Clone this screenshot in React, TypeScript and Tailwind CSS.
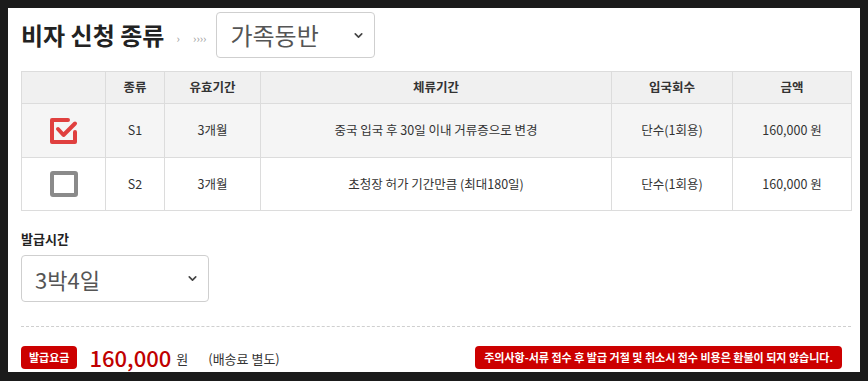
import { ChevronDown } from 'lucide-react';

interface VisaRow {
  code: string;
  valid: string;
  stay: string;
  entry: string;
  price: string;
  checked: boolean;
}

const rows: VisaRow[] = [
  {
    code: 'S1',
    valid: '3개월',
    stay: '중국 입국 후 30일 이내 거류증으로 변경',
    entry: '단수(1회용)',
    price: '160,000 원',
    checked: true,
  },
  {
    code: 'S2',
    valid: '3개월',
    stay: '초청장 허가 기간만큼 (최대180일)',
    entry: '단수(1회용)',
    price: '160,000 원',
    checked: false,
  },
];

const CheckIcon = ({ checked }: { checked: boolean }) =>
  checked ? (
    <svg width="30" height="28" viewBox="0 0 30 28" fill="none">
      <path
        d="M19 3H3V25H26V15"
        stroke="#e0403f"
        strokeWidth="4"
        strokeLinejoin="round"
        strokeLinecap="round"
      />
      <path
        d="M9 12L14.5 18L26 6.5"
        stroke="#e0403f"
        strokeWidth="4"
        strokeLinejoin="round"
        strokeLinecap="round"
      />
    </svg>
  ) : (
    <svg width="30" height="28" viewBox="0 0 30 28" fill="none">
      <rect x="3" y="3" width="24" height="22" stroke="#8a8a8a" strokeWidth="4" rx="1" />
    </svg>
  );

const SelectBox = ({
  value,
  className,
  textSize,
}: {
  value: string;
  className: string;
  textSize: string;
}) => (
  <div
    className={`flex items-center justify-between rounded border border-[#cfcfcf] bg-white pl-[13px] pr-[9px] ${className}`}
  >
    <span className={`${textSize} leading-none text-[#555]`}>{value}</span>
    <ChevronDown size={13} strokeWidth={3} className="text-[#444]" />
  </div>
);

export default function App() {
  return (
    <div
      className="h-[381px] w-[868px] overflow-hidden bg-[#1b1b1b] pl-2 pt-2"
      style={{ fontFamily: '"Noto Sans CJK KR", "Noto Sans", sans-serif' }}
    >
      <div className="h-[364px] w-[852px] overflow-hidden bg-white pl-[13px] pr-[9px] pt-[4px]">
        {/* title */}
        <div className="flex items-center">
          <h2 className="text-[24px] font-bold leading-none text-[#222]">비자 신청 종류</h2>
          <span className="ml-[12px] mr-[10px] mt-[6px] flex w-[30px] justify-between text-[11px] leading-none text-[#999]">
            <span>›</span>
            <span>››››</span>
          </span>
          <SelectBox value="가족동반" textSize="text-[24px]" className="h-[46px] w-[159px]" />
        </div>

        {/* table */}
        <table className="mt-[13px] w-[830px] table-fixed border-collapse text-center text-[12.5px] text-[#333]">
          <colgroup>
            <col className="w-[84px]" />
            <col className="w-[59px]" />
            <col className="w-[96px]" />
            <col className="w-[351px]" />
            <col className="w-[121px]" />
            <col className="w-[119px]" />
          </colgroup>
          <thead>
            <tr className="h-[32px] bg-[#f0f0f0] font-bold">
              <th className="border border-[#dcdcdc]"></th>
              <th className="border border-[#dcdcdc]">종류</th>
              <th className="border border-[#dcdcdc]">유효기간</th>
              <th className="border border-[#dcdcdc]">체류기간</th>
              <th className="border border-[#dcdcdc]">입국회수</th>
              <th className="border border-[#dcdcdc]">금액</th>
            </tr>
          </thead>
          <tbody>
            {rows.map((r, i) => (
              <tr key={r.code} className={i === 0 ? 'h-[54px] bg-[#f5f5f5]' : 'h-[53px] bg-white'}>
                <td className="border border-[#dcdcdc]">
                  <div className="flex justify-center">
                    <CheckIcon checked={r.checked} />
                  </div>
                </td>
                <td className="border border-[#dcdcdc]">{r.code}</td>
                <td className="border border-[#dcdcdc]">{r.valid}</td>
                <td className="border border-[#dcdcdc]">{r.stay}</td>
                <td className="border border-[#dcdcdc]">{r.entry}</td>
                <td className="border border-[#dcdcdc]">{r.price}</td>
              </tr>
            ))}
          </tbody>
        </table>

        {/* issue time */}
        <p className="mt-[18px] text-[13px] font-bold leading-[20px] text-[#222]">발급시간</p>
        <SelectBox value="3박4일" textSize="text-[22px]" className="mt-[6px] h-[47px] w-[188px]" />

        <div className="mt-[24px] w-[830px] border-t border-dashed border-[#cfcfcf]" />

        {/* price row */}
        <div className="mt-[18px] flex w-[830px] items-center">
          <span className="rounded bg-[#cc0000] px-[8px] py-[4px] text-[11px] font-bold leading-[15px] text-white">
            발급요금
          </span>
          <span className="ml-[12px] text-[22px] font-medium leading-[24px] text-[#c00000]">160,000</span>
          <span className="ml-[5px] mt-[3px] text-[13px] leading-[20px] text-[#333]">원</span>
          <span className="ml-[20px] mt-[3px] text-[13px] leading-[20px] text-[#333]">(배송료 별도)</span>
          <span className="ml-auto mr-[9px] rounded bg-[#cc0000] px-[9px] py-[3px] text-[11px] font-bold leading-[17px] text-white">
            주의사항-서류 접수 후 발급 거절 및 취소시 접수 비용은 환불이 되지 않습니다.
          </span>
        </div>
      </div>
    </div>
  );
}
